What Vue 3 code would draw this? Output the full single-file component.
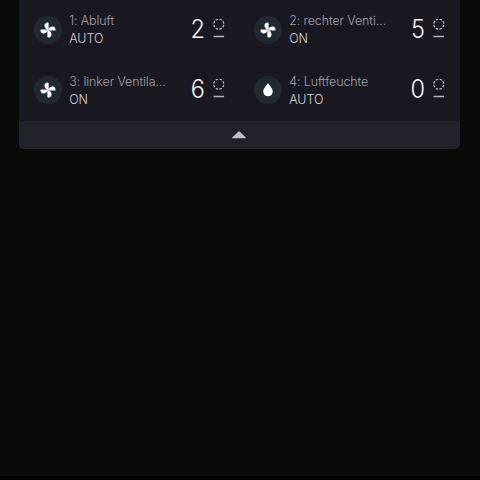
<script setup>
const ports = [
  { id: 1, name: '1: Abluft', mode: 'AUTO', level: 2, icon: 'fan' },
  { id: 2, name: '2: rechter Venti...', mode: 'ON', level: 5, icon: 'fan' },
  { id: 3, name: '3: linker Ventila...', mode: 'ON', level: 6, icon: 'fan' },
  { id: 4, name: '4: Luftfeuchte', mode: 'AUTO', level: 0, icon: 'drop' },
]
const quarters = [0, 90, 180, 270]
</script>

<template>
  <main class="screen">
    <section class="card">
      <div class="ports">
        <article v-for="port in ports" :key="port.id" class="port">
          <span class="badge">
            <svg v-if="port.icon === 'fan'" width="28" height="28" viewBox="-14 -14 28 28">
              <path
                v-for="q in quarters"
                :key="q"
                :transform="`rotate(${q})`"
                d="M.6-.3H-.3C-2.5-.9-3.7-2.9-3.5-4.9C-3.3-6.6-2-7.5-.3-7.5C.3-7.5.6-7.2.6-6.6Z"
                fill="#fff"
              />
            </svg>
            <svg v-else width="28" height="28" viewBox="-14 -14 28 28">
              <path d="M0-7C1.5-4.4 4.8-1.5 4.8 1.5A4.8 4.8 0 0 1-4.8 1.5C-4.8-1.5-1.5-4.4 0-7Z" fill="#fff" />
            </svg>
          </span>
          <div class="label">
            <div class="name">{{ port.name }}</div>
            <div class="mode">{{ port.mode }}</div>
          </div>
          <span class="level">{{ port.level }}</span>
          <svg class="state" width="12" height="20" viewBox="0 0 12 20">
            <circle cx="5.8" cy="5.2" r="5" fill="none" stroke="#b9b8be" stroke-width="1.2" pathLength="80" stroke-dasharray="6.6 3.4" stroke-dashoffset="-1.7" />
            <path d="M.5 17.5H11.1" stroke="#b5b4ba" stroke-width="1.4" />
          </svg>
        </article>
      </div>
      <div class="toggle">
        <svg width="16" height="8" viewBox="0 0 16 8">
          <path d="M7.2.7Q8 0 8.8.7L14.6 6.3Q15.2 7.2 14.3 7.2H1.7Q.8 7.2 1.4 6.3Z" fill="#c0bfc4" />
        </svg>
      </div>
    </section>
  </main>
</template>

<style>
body {
  margin: 0;
  background: #060b08;
}
</style>

<style scoped>
.screen {
  box-sizing: border-box;
  height: 480px;
  padding: 0 20px 0 19px;
  background: #060b08;
  border-bottom: 4px solid #020202;
  font-family: Inter, "Liberation Sans", sans-serif;
  overflow: hidden;
}
.card {
  height: 149.4px;
  border-radius: 0 0 5px 5px;
  background: #191820;
  overflow: hidden;
}
.ports {
  display: grid;
  grid-template-columns: 220px 220px;
  grid-template-rows: 59px 62px;
  height: 121px;
}
.port {
  display: flex;
  align-items: center;
  box-sizing: border-box;
  padding: 0 14.5px 0 15px;
}
.badge {
  display: flex;
  width: 28px;
  height: 28px;
  border-radius: 50%;
  background: #202830;
}
.label {
  width: 102px;
  margin-left: 7.2px;
  white-space: nowrap;
}
.name {
  font-size: 12.4px;
  line-height: 18px;
  font-weight: 300;
  letter-spacing: -0.07px;
  color: #a2a1a7;
}
.mode {
  font-size: 12.4px;
  line-height: 17px;
  font-weight: 300;
  color: #d4d3d9;
}
.level {
  width: 30px;
  text-align: right;
  padding-right: 8px;
  margin-left: auto;
  box-sizing: border-box;
  font-size: 25px;
  line-height: 30px;
  font-weight: 300;
  color: #f4f4f6;
  transform: translateY(-0.8px) scaleX(0.94);
  transform-origin: 22px 50%;
}
.state {
  flex: none;
  margin-bottom: 2px;
}
.toggle {
  display: flex;
  align-items: center;
  justify-content: center;
  height: 28px;
  padding-right: 0.5px;
  box-sizing: border-box;
  background: #222129;
}
</style>
